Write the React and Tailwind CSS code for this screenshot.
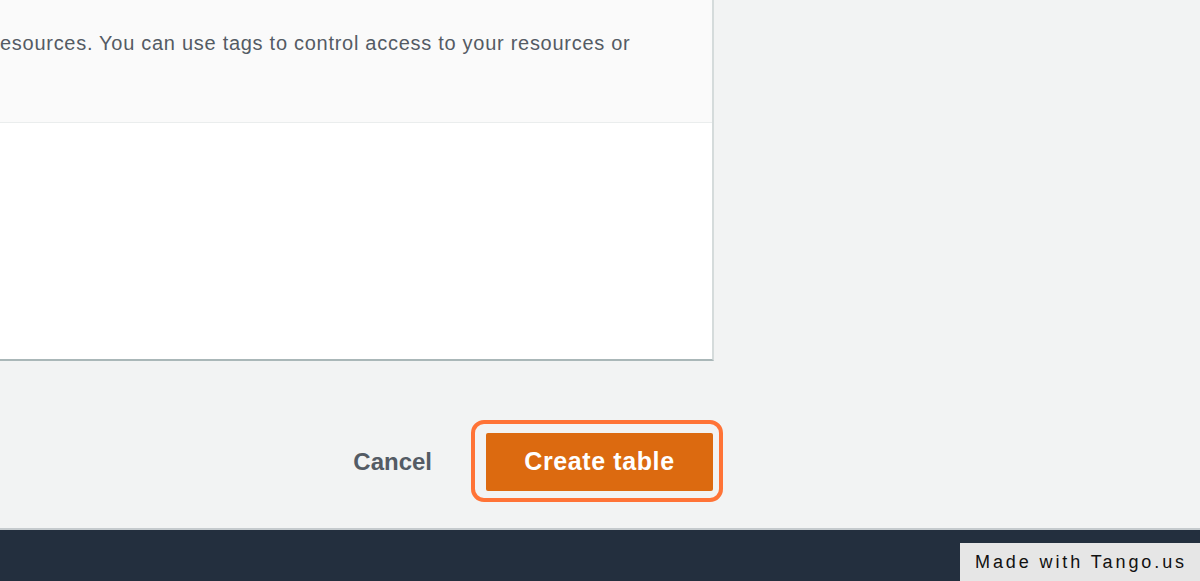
export default function App() {
  return (
    <div className="relative h-[581px] w-[1200px] overflow-hidden bg-[#f2f3f3] font-['Liberation_Sans',Arial,sans-serif]">
      {/* Tags card */}
      <div className="w-[714px] border-r-2 border-b-2 border-r-[#d5dbdb] border-b-[#aab7b8] bg-white">
        <div className="h-[123px] border-b border-[#eaeded] bg-[#fafafa] pt-[31px]">
          <p className="whitespace-nowrap text-[20px] leading-[24px] tracking-[0.72px] text-[#545b64]">
            esources. You can use tags to control access to your resources or
          </p>
        </div>
        <div className="h-[236px]" />
      </div>

      {/* Actions */}
      <div className="flex h-[167px] w-[723px] items-start justify-end gap-[39px] pt-[59px]">
        <button className="mt-[28px] text-[24px] font-bold leading-[28px] text-[#545b64]">
          Cancel
        </button>
        <div className="rounded-[13px] border-4 border-[#ff7336] pb-[7px] pl-[11px] pr-[6px] pt-[9px]">
          <button className="flex h-[58px] w-[227px] items-center justify-center rounded-[2px] bg-[#dc6a10] text-[25px] font-bold tracking-[0.6px] text-white">
            Create table
          </button>
        </div>
      </div>

      {/* Footer */}
      <div className="h-[54px] border-t-2 border-[#c5cacd] bg-[#232f3e]" />

      <div className="absolute bottom-0 right-0 flex h-[38px] w-[240px] items-center bg-[#e6e6e6] pl-[15px]">
        <span className="whitespace-nowrap text-[18px] tracking-[2.9px] text-[#111]">Made with Tango.us</span>
      </div>
    </div>
  )
}
